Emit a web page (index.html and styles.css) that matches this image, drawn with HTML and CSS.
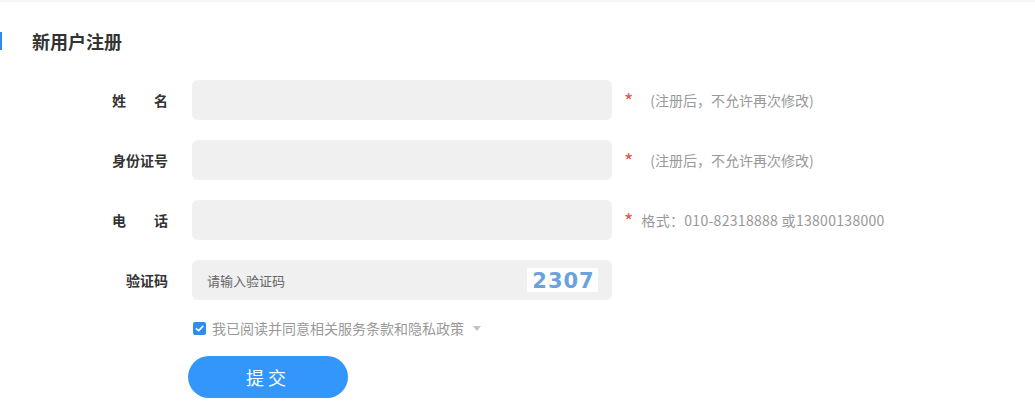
FILE: index.html
```html
<!DOCTYPE html>
<html lang="zh-CN">
<head>
    <meta charset="UTF-8">
    <meta name="viewport" content="width=device-width, initial-scale=1.0">
    <title>新用户注册</title>
    <link rel="stylesheet" href="styles.css">
</head>
<body>
    <div class="topbar"></div>

    <h2 class="title">新用户注册</h2>

    <form class="reg-form">
        <!-- 姓名 -->
        <div class="row">
            <label class="label"><span class="label-text justify">姓名</span></label>
            <div class="field"><input type="text" name="name"></div>
            <span class="star">*</span>
            <span class="hint">(注册后，不允许再次修改)</span>
        </div>

        <!-- 身份证号 -->
        <div class="row">
            <label class="label"><span class="label-text">身份证号</span></label>
            <div class="field"><input type="text" name="idcard"></div>
            <span class="star">*</span>
            <span class="hint">(注册后，不允许再次修改)</span>
        </div>

        <!-- 电话 -->
        <div class="row">
            <label class="label"><span class="label-text justify">电话</span></label>
            <div class="field"><input type="tel" name="phone"></div>
            <span class="star">*</span>
            <span class="hint hint-tight">格式：010-82318888 或13800138000</span>
        </div>

        <!-- 验证码 -->
        <div class="row">
            <label class="label"><span class="label-text">验证码</span></label>
            <div class="field">
                <input type="text" name="code" placeholder="请输入验证码">
                <span class="captcha">2307</span>
            </div>
        </div>

        <div class="agree">
            <span class="checkbox">
                <svg width="9" height="9" viewBox="0 0 10 10"><path d="M1.5 5.2 L4 7.5 L8.6 2.6" fill="none" stroke="#fff" stroke-width="1.8" stroke-linecap="round" stroke-linejoin="round"/></svg>
            </span>
            <span class="agree-text">我已阅读并同意相关服务条款和隐私政策</span>
            <span class="caret"></span>
        </div>

        <div class="actions">
            <button type="submit">提交</button>
        </div>
    </form>
</body>
</html>
```

FILE: styles.css
```css
body {
    margin: 0;
    font-family: "Noto Sans CJK SC", "Noto Sans", sans-serif;
    background-color: #fff;
    color: #333;
}

.topbar {
    height: 2px;
    background-color: #f5f5f5;
}

.title {
    margin: 30px 0 0;
    padding-left: 30px;
    border-left: 2px solid #2d8cf0;
    font-size: 18px;
    line-height: 18px;
    font-weight: bold;
    color: #333;
}

.reg-form {
    margin-top: 30px;
}

.row {
    display: flex;
    align-items: center;
    height: 40px;
    margin-bottom: 20px;
}

.label {
    width: 168px;
    margin-right: 24px;
    text-align: right;
    font-size: 14px;
    font-weight: bold;
    color: #333;
}

.label-text {
    display: inline-block;
}

.label-text.justify {
    width: 56px;
    text-align: justify;
    text-align-last: justify;
}

.field {
    display: flex;
    align-items: center;
    width: 420px;
    height: 40px;
    background-color: #f0f0f0;
    border-radius: 6px;
}

.field input {
    flex: 1;
    min-width: 0;
    height: 100%;
    padding: 0 15px;
    border: none;
    outline: none;
    background: transparent;
    font-family: inherit;
    font-size: 13px;
    color: #333;
}

.field input::placeholder {
    color: #666;
}

/* 验证码图片 */
.captcha {
    width: 71px;
    height: 24px;
    margin-right: 14px;
    padding-left: 2px;
    box-sizing: border-box;
    background-color: #fff;
    text-align: center;
    font-family: "DejaVu Sans", sans-serif;
    font-size: 21px;
    font-weight: bold;
    line-height: 27px;
    letter-spacing: 1px;
    color: #6ca2dc;
    overflow: hidden;
}

.star {
    margin-left: 12px;
    height: 20px;
    margin-top: 2px;
    font-size: 20px;
    line-height: 20px;
    color: #e8554e;
}

.hint {
    margin-left: 17px;
    font-size: 14px;
    color: #999;
}

.hint-tight {
    margin-left: 8px;
    letter-spacing: 0.3px;
}

.agree {
    display: flex;
    align-items: center;
    margin: 16px 0 0 193px;
    height: 16px;
}

.checkbox {
    display: flex;
    align-items: center;
    justify-content: center;
    width: 13px;
    height: 13px;
    border-radius: 2px;
    background-color: #2d8cf0;
}

.agree-text {
    margin-left: 6px;
    font-size: 14px;
    color: #999;
}

.caret {
    width: 0;
    height: 0;
    margin-left: 9px;
    border-left: 4px solid transparent;
    border-right: 4px solid transparent;
    border-top: 5px solid #c0c4cc;
}

.actions {
    margin: 20px 0 0 188px;
}

button {
    width: 160px;
    height: 42px;
    border: none;
    border-radius: 21px;
    background-color: #3296fa;
    color: #fff;
    font-family: inherit;
    font-size: 18px;
    letter-spacing: 4px;
    cursor: pointer;
}
```
